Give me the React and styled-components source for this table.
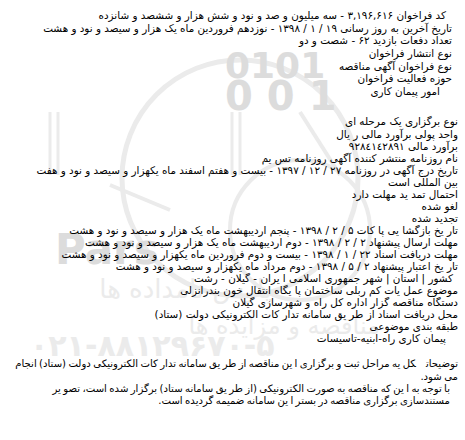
import React from "react";
import styled, { createGlobalStyle } from "styled-components";

const Global = createGlobalStyle`
  html, body { margin: 0; padding: 0; background: #fff; }
  body { font-family: "DejaVu Sans", "Liberation Sans", sans-serif; }
`;

const Page = styled.div`
  position: relative;
  width: 465px;
  height: 440px;
  overflow: hidden;
  background: #fff;
`;

const Watermark = styled.svg`
  position: absolute;
  left: 0;
  top: 0;
  width: 465px;
  height: 440px;
  pointer-events: none;
`;

const Content = styled.div`
  position: relative;
  direction: rtl;
  padding: 9px 7px 0 2px;
  color: #000;
  font-family: "DejaVu Sans", sans-serif;
  font-size: 10.4px;
`;

const Section = styled.div`
  display: flex;
  flex-direction: column;
  margin-top: ${(p) => p.$gap || 0}px;
  padding-right: ${(p) => p.$inset || 0}px;
`;

const Line = styled.div`
  line-height: ${(p) => p.$lh || 12.3}px;
  height: ${(p) => p.$lh || 12.3}px;
  white-space: nowrap;
  padding-right: ${(p) => p.$indent || 0}px;
`;

const Para = styled.p`
  margin: 0;
  font-size: 10.1px;
  word-spacing: -0.8px;
  line-height: 12.3px;
  padding-right: ${(p) => p.$indent || 0}px;
  padding-left: ${(p) => p.$left || 0}px;
`;

const Label = styled.span`
  margin-left: 10px;
`;

const first = [
  ["کد فراخوان  ۳,۱۹۶,۶۱۶ - سه میلیون و صد و نود و شش هزار و ششصد و شانزده", 6],
  ["تاریخ آخرین به روز رسانی  ۱۹ / ۱ / ۱۳۹۸ - نوزدهم فروردین ماه   یک هزار و سیصد و نود و هشت", 0],
  ["تعداد دفعات بازدید  ۶۲ - شصت و دو", 0],
  ["نوع انتشار  فراخوان", 0],
  ["نوع فراخوان  آگهی مناقصه", 0],
  ["حوزه فعالیت فراخوان", 0],
  ["امور پیمان کاری", 12],
];

const second = [
  ["نوع برگزاری   یک مرحله ای", 0],
  ["واحد پولی برآورد مالی  ر یال", 0],
  ["برآورد مالی  ٩٢٨٤١٤٢٨٩١", 0],
  ["نام روزنامه منتشر کننده آگهی  روزنامه تس یم", 0],
  ["تاریخ درج آگهی در روزنامه  ۲۷ / ۱۲ / ۱۳۹۷ - بیست و هفتم اسفند ماه  یکهزار و سیصد و نود و هفت", 0],
  ["بین المللی است", 0],
  ["احتمال تمد ید مهلت دارد", 0],
  ["لغو شده", 0],
  ["تجدید شده", 0],
  ["تار یخ بازگشا یی پا کات  ۵ / ۲ / ۱۳۹۸ - پنجم اردیبهشت ماه  یک هزار و سیصد و نود و هشت", 0],
  ["مهلت ارسال پیشنهاد  ۲ / ۲ / ۱۳۹۸ - دوم اردیبهشت ماه  یک هزار و سیصد و نود و هشت", 0],
  ["مهلت دریافت اسناد  ۲۲ / ۱ / ۱۳۹۸ - بیست و دوم فروردین ماه  یکهزار و سیصد و نود و هشت", 0],
  ["تار یخ اعتبار پیشنهاد  ۲ / ۵ / ۱۳۹۸ - دوم مرداد ماه  یکهزار و سیصد و نود و هشت", 0],
  ["کشور | استان | شهر  جمهوری اسلامی ا یران - گیلان - رشت", 5],
  ["موضوع  عمل یات کم ربلی ساختمان پا یگاه انتقال خون بندرانزلی", 0],
  ["دستگاه مناقصه گزار  اداره  کل راه و شهرسازی گیلان", 0],
  ["محل دریافت اسناد  از طر یق سامانه تدار کات الکترونیکی دولت (ستاد)", 0],
  ["طبقه بندی موضوعی", 0],
  ["پیمان کاری راه-ابنیه-تاسیسات", 12],
];

function WatermarkArt() {
  const g = "#dcdcdc";
  const l = "#ebebeb";
  return (
    <Watermark viewBox="0 0 465 440" aria-hidden="true">
      <circle cx="240" cy="178" r="118" fill="none" stroke={l} strokeWidth="5" />
      <circle cx="300" cy="230" r="70" fill="none" stroke={l} strokeWidth="4" />
      <line x1="50" y1="112" x2="50" y2="175" stroke={l} strokeWidth="3" />
      <line x1="58" y1="112" x2="58" y2="175" stroke={l} strokeWidth="3" />
      <line x1="232" y1="112" x2="232" y2="175" stroke={l} strokeWidth="3" />
      <line x1="240" y1="112" x2="240" y2="175" stroke={l} strokeWidth="3" />
      <line x1="110" y1="185" x2="170" y2="210" stroke={l} strokeWidth="4" />
      <line x1="300" y1="112" x2="340" y2="175" stroke={l} strokeWidth="4" />
      <text x="225" y="78" fontFamily="DejaVu Sans" fontWeight="bold" fontSize="36" fill={g}>0101</text>
      <text x="225" y="110" fontFamily="DejaVu Sans" fontWeight="bold" fontSize="40" letterSpacing="14" fill={g}>001</text>
      <text x="55" y="264" fontFamily="DejaVu Sans" fontWeight="bold" fontSize="42" fill={g}>Pars</text>
      <text x="272" y="298" fontFamily="DejaVu Sans" fontSize="26" fill={l} textAnchor="end">پارس نامداده ها</text>
      <text x="380" y="334" fontFamily="DejaVu Sans" fontSize="24" fill={l} textAnchor="end">مناقصه و مزایده ها</text>
      <text x="30" y="356" fontFamily="DejaVu Sans" fontWeight="bold" fontSize="30" letterSpacing="3" fill={l}>۰۲۱-۸۸۱۲۹۶۷۰-۵</text>
    </Watermark>
  );
}

export default function App() {
  return (
    <>
      <Global />
      <Page>
        <WatermarkArt />
        <Content>
          <Section $inset={6}>
            {first.map(([t, ind], i) => (
              <Line key={i} $lh={12.65} $indent={ind}>{t}</Line>
            ))}
          </Section>
          <Section $gap={18}>
            {second.map(([t, ind], i) => (
              <Line key={i} $lh={12.06} $indent={ind}>{t}</Line>
            ))}
          </Section>
          <Section $gap={14}>
            <Para>
              <Label>توضیحات</Label>
              کل یه مراحل ثبت و برگزاری ا ین مناقصه از طر یق سامانه تدار کات الکترونیکی دولت (ستاد) انجام می شود.
            </Para>
            <Para $indent={8} $left={10}>
              با توجه به ا ین که مناقصه به صورت الکترونیکی (از طر یق سامانه ستاد) برگزار شده است، تصو یر مستندسازی برگزاری مناقصه در بستر ا ین سامانه ضمیمه گردیده است.
            </Para>
          </Section>
        </Content>
      </Page>
    </>
  );
}
